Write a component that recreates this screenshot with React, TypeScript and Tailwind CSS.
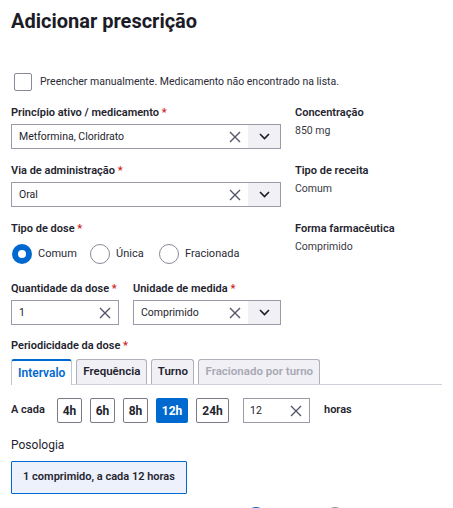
import React from "react";

const XIcon = () => (
  <svg width="12" height="12" viewBox="0 0 12 12" fill="none">
    <path d="M1 1L11 11M11 1L1 11" stroke="#55556a" strokeWidth="1.4" />
  </svg>
);

const Chevron = () => (
  <svg width="11" height="7" viewBox="0 0 11 7" fill="none">
    <path d="M1 1L5.5 5.5L10 1" stroke="#1c1c28" strokeWidth="1.6" />
  </svg>
);

const Label = ({ children, req = true }: { children: React.ReactNode; req?: boolean }) => (
  <div className="h-4 text-[11px] leading-4 font-semibold text-[#24242e] whitespace-nowrap">
    {children}
    {req && <span className="text-[#d01c1c]"> *</span>}
  </div>
);

const Select = ({ value, w }: { value: string; w: string }) => (
  <div className={`${w} h-[25px] mt-[3px] flex border border-[#9a9aa8] bg-white`}>
    <div className="flex-1 flex items-center pl-[7px] text-[10.5px] text-[#24242e]">{value}</div>
    <div className="w-[26px] flex items-center justify-center">
      <XIcon />
    </div>
    <div className="w-[32px] bg-[#f0f0f5] flex items-center justify-center">
      <Chevron />
    </div>
  </div>
);

const Radio = ({ checked, label, w }: { checked?: boolean; label: string; w: string }) => (
  <div className={`${w} flex items-center gap-[6px]`}>
    {checked ? (
      <div className="w-5 h-5 shrink-0 rounded-full bg-[#0069d0] flex items-center justify-center">
        <div className="w-[8px] h-[8px] rounded-full bg-white" />
      </div>
    ) : (
      <div className="w-5 h-5 shrink-0 rounded-full border border-[#8a8a99] bg-white" />
    )}
    <span className="text-[11px] text-[#2a2a36]">{label}</span>
  </div>
);

const HourBtn = ({ h, active, w }: { h: string; active?: boolean; w: string }) => (
  <div
    className={`${w} h-[25px] flex items-center justify-center rounded-[2px] text-[12px] font-bold ${
      active ? "bg-[#0069d0] text-white" : "border border-[#7a7a88] text-[#24242e] bg-white"
    }`}
  >
    {h}
  </div>
);

export default function App() {
  return (
    <div
      className="w-[453px] h-[508px] overflow-hidden bg-white px-[11px] text-[#24242e]"
      style={{ fontFamily: 'Roboto, "Noto Sans", sans-serif' }}
    >
      <h1 className="pt-[7px] text-[20px] leading-7 font-bold text-[#1c1c28]">Adicionar prescrição</h1>

      <div className="mt-[38px] flex items-center gap-[8px] pl-[3px] h-[18px]">
        <div className="w-[18px] h-[18px] border border-[#8a8a99] rounded-[2px] bg-white" />
        <span className="text-[10.5px] text-[#2a2a36]">
          Preencher manualmente. Medicamento não encontrado na lista.
        </span>
      </div>

      <div className="mt-[14px] grid grid-cols-[284px_1fr]">
        <div>
          <Label>Princípio ativo / medicamento</Label>
          <Select value="Metformina, Cloridrato" w="w-[270px]" />
        </div>
        <div>
          <div className="h-4 text-[11px] leading-4 font-semibold">Concentração</div>
          <div className="mt-[2px] text-[10.5px] text-[#3a3a46]">850 mg</div>
        </div>

        <div className="mt-[14px]">
          <Label>Via de administração</Label>
          <Select value="Oral" w="w-[270px]" />
        </div>
        <div className="mt-[14px]">
          <div className="h-4 text-[11px] leading-4 font-semibold">Tipo de receita</div>
          <div className="mt-[2px] text-[10.5px] text-[#3a3a46]">Comum</div>
        </div>

        <div className="mt-[14px]">
          <Label>Tipo de dose</Label>
          <div className="mt-[7px] flex items-center pl-[1px]">
            <Radio checked label="Comum" w="w-[78px]" />
            <Radio label="Única" w="w-[69px]" />
            <Radio label="Fracionada" w="w-[90px]" />
          </div>
        </div>
        <div className="mt-[14px]">
          <div className="h-4 text-[11px] leading-4 font-semibold">Forma farmacêutica</div>
          <div className="mt-[2px] text-[10.5px] text-[#3a3a46]">Comprimido</div>
        </div>

        <div className="mt-[17px] flex gap-[14px]">
          <div className="w-[108px]">
            <Label>Quantidade da dose</Label>
            <div className="w-[108px] h-[25px] mt-[3px] flex border border-[#9a9aa8] bg-white">
              <div className="flex-1 flex items-center pl-[7px] text-[10.5px]">1</div>
              <div className="w-[26px] flex items-center justify-center">
                <XIcon />
              </div>
            </div>
          </div>
          <div>
            <Label>Unidade de medida</Label>
            <Select value="Comprimido" w="w-[148px]" />
          </div>
        </div>
        <div />
      </div>

      <div className="mt-[13px]">
        <Label>Periodicidade da dose</Label>
        <div className="mt-[5px] flex items-end border-b border-[#d0d0da] h-[26px] gap-[4px]">
          <div className="h-[26px] -mb-px px-[6px] flex items-center bg-white border-t-2 border-t-[#0069d0] border-x border-x-[#c4c4ce] rounded-t-[3px] text-[12px] font-semibold text-[#0069d0]">
            Intervalo
          </div>
          <div className="h-[25px] w-[71px] flex items-center justify-center bg-[#f0f0f5] border border-b-0 border-[#b0b0bc] rounded-t-[3px] text-[11.5px] font-semibold">
            Frequência
          </div>
          <div className="h-[25px] w-[43px] flex items-center justify-center bg-[#f0f0f5] border border-b-0 border-[#b0b0bc] rounded-t-[3px] text-[11.5px] font-semibold">
            Turno
          </div>
          <div className="h-[25px] w-[122px] flex items-center justify-center bg-[#f0f0f5] border border-b-0 border-[#b0b0bc] rounded-t-[3px] text-[11.5px] font-semibold text-[#a8a8b4] whitespace-nowrap">
            Fracionado por turno
          </div>
        </div>
      </div>

      <div className="mt-[13px] flex items-center h-[25px]">
        <span className="text-[11px] font-semibold w-[46px] shrink-0">A cada</span>
        <div className="flex gap-[8px]">
          <HourBtn h="4h" w="w-[25px]" />
          <HourBtn h="6h" w="w-[25px]" />
          <HourBtn h="8h" w="w-[25px]" />
          <HourBtn h="12h" active w="w-[32px]" />
          <HourBtn h="24h" w="w-[33px]" />
        </div>
        <div className="ml-[14px] w-[67px] h-[25px] flex border border-[#9a9aa8] bg-white">
          <div className="flex-1 flex items-center pl-[6px] text-[10.5px]">12</div>
          <div className="w-[26px] flex items-center justify-center">
            <XIcon />
          </div>
        </div>
        <span className="ml-[14px] text-[11px] font-semibold">horas</span>
      </div>

      <div className="mt-[14px] text-[12px] leading-4 text-[#24242e]">Posologia</div>
      <div className="mt-[8px] w-[176px] h-[33px] flex items-center justify-center border border-[#0069d0] bg-[#edf1fc] rounded-[1px] text-[11px] font-semibold">
        1 comprimido, a cada 12 horas
      </div>

      <div className="mt-[13px] flex gap-[59px] pl-[235px]">
        <div className="w-5 h-5 rounded-full bg-[#0069d0]" />
        <div className="w-5 h-5 rounded-full border border-[#8a8a99]" />
      </div>
    </div>
  );
}
